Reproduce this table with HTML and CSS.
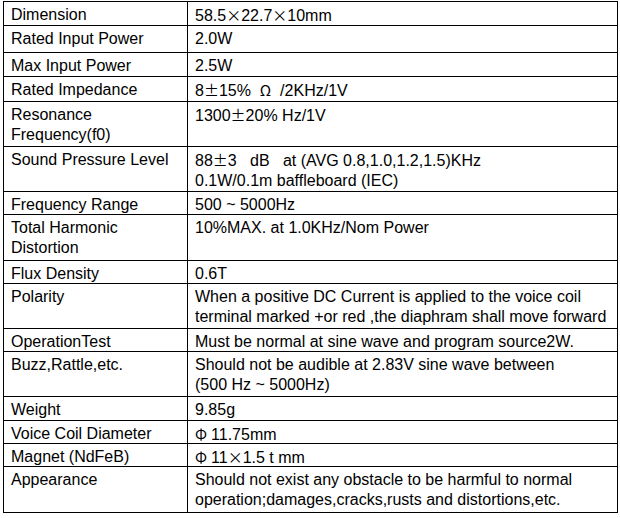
FILE: index.html
```html
<!DOCTYPE html>
<html>
<head>
<meta charset="utf-8">
<link rel="stylesheet" href="styles.css">
</head>
<body>
<div class="spec">
  <div class="k">Dimension</div><div class="v">58.5<span class="cjk">×</span>22.7<span class="cjk">×</span>10mm</div>
  <div class="k">Rated Input Power</div><div class="v">2.0W</div>
  <div class="k">Max Input Power</div><div class="v">2.5W</div>
  <div class="k">Rated Impedance</div><div class="v">8<span class="cjk">±</span>15%&nbsp; <span class="cjk">Ω</span>&nbsp; /2KHz/1V</div>
  <div class="k">Resonance<br>Frequency(f0)</div><div class="v">1300<span class="cjk">±</span>20% Hz/1V</div>
  <div class="k">Sound Pressure Level</div><div class="v">88<span class="cjk">±</span>3&nbsp;&nbsp; dB&nbsp;&nbsp; at (AVG 0.8,1.0,1.2,1.5)KHz<br>0.1W/0.1m baffleboard (IEC)</div>
  <div class="k">Frequency Range</div><div class="v">500 ~ 5000Hz</div>
  <div class="k">Total Harmonic<br>Distortion</div><div class="v">10%MAX. at 1.0KHz/Nom Power</div>
  <div class="k">Flux Density</div><div class="v">0.6T</div>
  <div class="k">Polarity</div><div class="v">When a positive DC Current is applied to the voice coil<br>terminal marked +or red ,the diaphram shall move forward</div>
  <div class="k">OperationTest</div><div class="v">Must be normal at sine wave and program source2W.</div>
  <div class="k">Buzz,Rattle,etc.</div><div class="v">Should not be audible at 2.83V sine wave between<br>(500 Hz ~ 5000Hz)</div>
  <div class="k">Weight</div><div class="v">9.85g</div>
  <div class="k">Voice Coil Diameter</div><div class="v"><span class="cjk phi">Φ</span>11.75mm</div>
  <div class="k">Magnet (NdFeB)</div><div class="v"><span class="cjk phi">Φ</span>11<span class="cjk">×</span>1.5 t mm</div>
  <div class="k">Appearance</div><div class="v">Should not exist any obstacle to be harmful to normal<br>operation;damages,cracks,rusts and distortions,etc.</div>
</div>
</body>
</html>
```

FILE: styles.css
```css
html, body {
  margin: 0;
  padding: 0;
  background: #ffffff;
}
.spec {
  margin: 1px 0 0 3px;
  width: 615px;
  box-sizing: border-box;
  display: grid;
  grid-template-columns: 184px 430px;
  grid-template-rows: 24px 27px 24px 25px 45px 45px 23px 46px 23px 45px 23px 45px 24px 23px 23px 46px;
  border-top: 1px solid #000;
  border-left: 1px solid #000;
  font-family: "Liberation Sans", Arial, sans-serif;
  font-size: 16px;
  line-height: 20px;
  color: #000;
}
.k, .v {
  box-sizing: border-box;
  border-right: 1px solid #000;
  border-bottom: 1px solid #000;
  padding: 3px 0 0 7px;
  white-space: nowrap;
  overflow: hidden;
}
.cjk {
  font-family: "Noto Sans CJK SC", sans-serif;
  font-size: 15px;
}
.phi {
  margin-right: 4px;
}
```
